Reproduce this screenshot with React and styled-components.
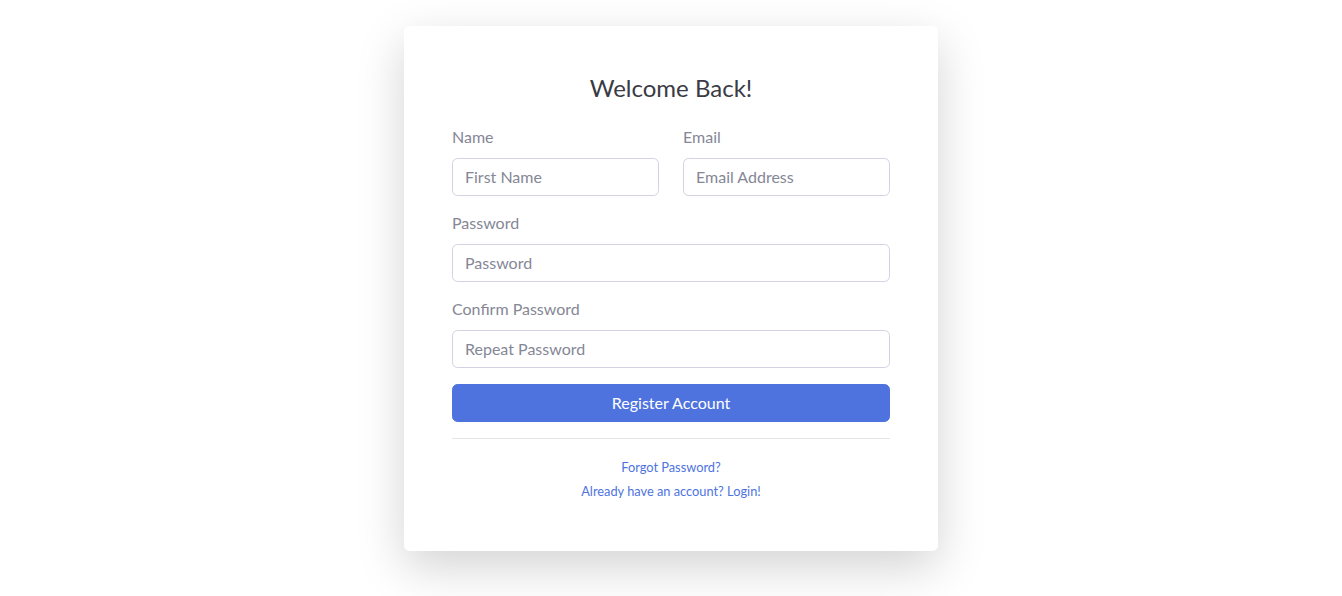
import React from 'react'
import styled, { createGlobalStyle } from 'styled-components'

const GlobalStyle = createGlobalStyle`
  * {
    box-sizing: border-box;
  }

  body {
    margin: 0;
    background: #fff;
    font-family: Lato, "Noto Sans", sans-serif;
    font-size: 16px;
    line-height: 1.5;
    color: #858796;
  }
`

const Page = styled.div`
  display: flex;
  justify-content: center;
  align-items: flex-start;
  padding-top: 26px;
  min-height: 596px;
`

const Card = styled.div`
  width: 534px;
  padding: 48px;
  background: #fff;
  border-radius: 5.6px;
  box-shadow: 0 16px 48px rgba(0, 0, 0, 0.175);
`

const Title = styled.h4`
  margin: 0 0 23px;
  text-align: center;
  font-size: 24px;
  font-weight: 400;
  line-height: 1.2;
  color: #3a3b45;
`

const Form = styled.form`
  display: flex;
  flex-direction: column;
`

const Row = styled.div`
  display: grid;
  grid-template-columns: minmax(0, 1fr) minmax(0, 1fr);
  column-gap: 24px;
`

const Group = styled.div`
  display: flex;
  flex-direction: column;
  min-width: 0;
  margin-bottom: 16px;
`

const Label = styled.label`
  margin-bottom: 10px;
  font-size: 16px;
  line-height: 22px;
  color: #858796;
`

const Input = styled.input`
  width: 100%;
  min-width: 0;
  height: 38px;
  padding: 6px 12px;
  font-family: inherit;
  font-size: 16px;
  color: #6e707e;
  background: #fff;
  border: 1px solid #d1d3e2;
  border-radius: 5.6px;
  outline: none;

  &::placeholder {
    color: #858796;
    opacity: 1;
  }
`

const Button = styled.button`
  height: 38px;
  width: 100%;
  border: 1px solid #4e73df;
  border-radius: 5.6px;
  background: #4e73df;
  color: #fff;
  font-family: inherit;
  font-size: 16px;
  cursor: pointer;
`

const Divider = styled.hr`
  margin: 16px 0;
  border: 0;
  border-top: 1px solid rgba(0, 0, 0, 0.1);
`

const LinkLine = styled.div`
  text-align: center;
  font-size: 12.8px;
  line-height: 24px;
`

const Link = styled.a`
  color: #4e73df;
  text-decoration: none;
`

const Field = ({ label, placeholder, type = 'text' }) => (
  <Group>
    <Label>{label}</Label>
    <Input type={type} placeholder={placeholder} />
  </Group>
)

export default function App() {
  return (
    <>
      <GlobalStyle />
      <Page>
        <Card>
          <Title>Welcome Back!</Title>
          <Form onSubmit={e => e.preventDefault()}>
            <Row>
              <Field label="Name" placeholder="First Name" />
              <Field label="Email" placeholder="Email Address" type="email" />
            </Row>
            <Field label="Password" placeholder="Password" type="password" />
            <Field label="Confirm Password" placeholder="Repeat Password" type="password" />
            <Button type="submit">Register Account</Button>
          </Form>
          <Divider />
          <LinkLine>
            <Link href="#">Forgot Password?</Link>
          </LinkLine>
          <LinkLine>
            <Link href="#">Already have an account? Login!</Link>
          </LinkLine>
        </Card>
      </Page>
    </>
  )
}
